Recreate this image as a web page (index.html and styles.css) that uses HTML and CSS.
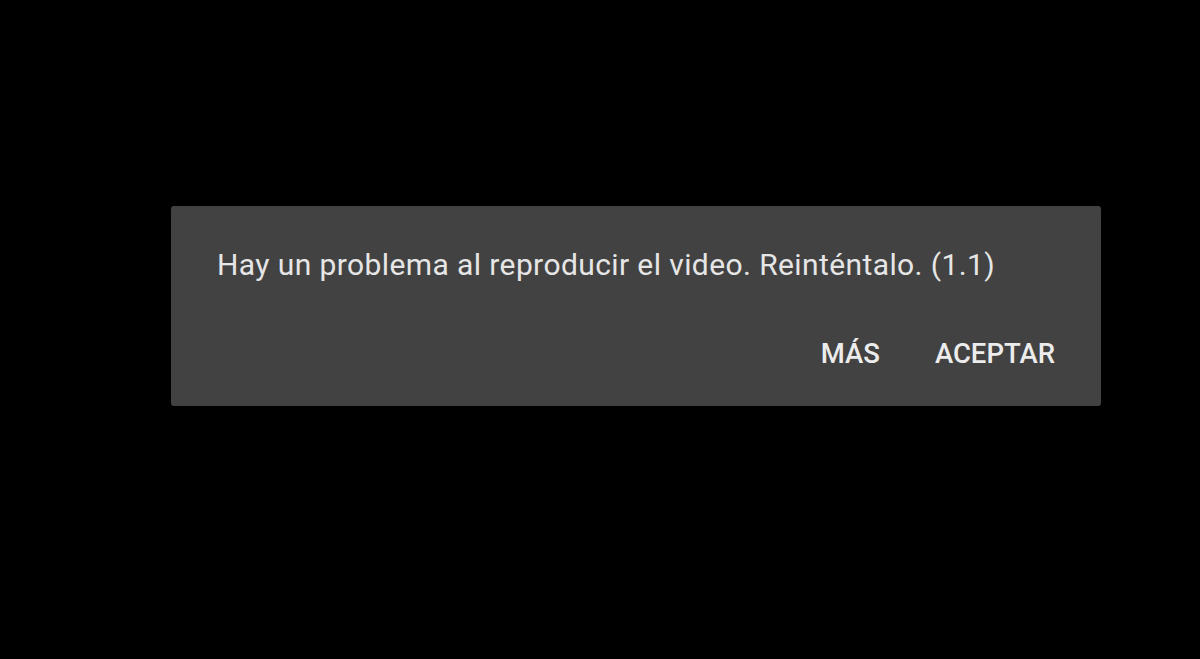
FILE: index.html
```html
<!DOCTYPE html>
<html lang="es">
<head>
<meta charset="utf-8">
<link rel="stylesheet" href="styles.css">
</head>
<body>
<div class="screen">
  <div class="dialog">
    <p class="message">Hay un problema al reproducir el video. Reinténtalo. (1.1)</p>
    <div class="actions">
      <span class="btn">MÁS</span>
      <span class="btn">ACEPTAR</span>
    </div>
  </div>
</div>
</body>
</html>
```

FILE: styles.css
```css
html, body {
  margin: 0;
  padding: 0;
  background: #000;
}
.screen {
  width: 1200px;
  height: 659px;
  padding-top: 206px;
  padding-left: 171px;
  box-sizing: border-box;
}
.dialog {
  width: 930px;
  height: 200px;
  background: #424242;
  border-radius: 3px;
  box-sizing: border-box;
  padding: 37px 46px 0 46px;
  font-family: Roboto, "Noto Sans", sans-serif;
  color: #e6e6e6;
}
.message {
  margin: 0;
  font-size: 30px;
  letter-spacing: 0.4px;
  line-height: 44px;
}
.actions {
  display: flex;
  justify-content: flex-end;
  gap: 55px;
  margin-top: 47px;
}
.btn {
  font-size: 27.5px;
  font-weight: 500;
  line-height: 40px;
  color: #ececec;
}
```
